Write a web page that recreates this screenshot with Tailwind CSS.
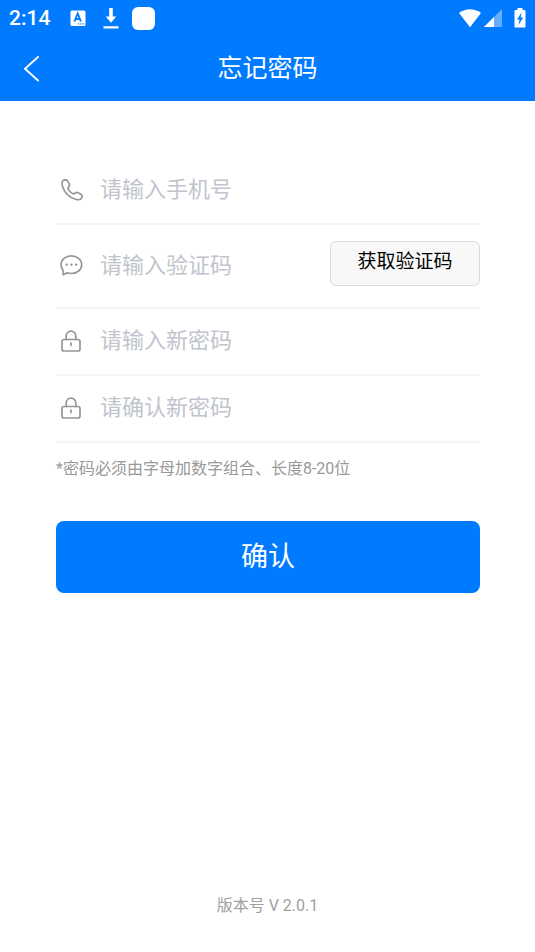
<!DOCTYPE html>
<html lang="zh-CN">
<head>
<meta charset="utf-8">
<meta name="viewport" content="width=device-width, initial-scale=1">
<title>忘记密码</title>
<script src="https://cdn.jsdelivr.net/npm/@tailwindcss/browser@4"></script>
</head>
<body class="flex min-h-screen flex-col bg-white font-[Roboto,'Noto_Sans_CJK_SC',sans-serif]">
  <header class="bg-[#007aff] text-white">
    <div class="flex h-9 items-center justify-between pr-[9px] pl-[9px]">
      <div class="flex items-center">
        <span class="w-[61px] text-[21px] leading-7 font-medium">2:14</span>
        <svg class="h-4 w-4" viewBox="0 0 16 16" aria-hidden="true">
          <rect x="0.5" y="0.5" width="15" height="15.500" rx="1.500" fill="#fff"/>
          <path d="M4.500 11.500 7.700 3.500 10.900 11.500M5.700 9H9.700" fill="none" stroke="#007aff" stroke-width="1.900"/>
          <path d="M8 13.200H9.200V14.400H8ZM10.300 13.200H11.500V14.400H10.300ZM12.600 13.200H13.800V14.400H12.600Z" fill="#007aff"/>
        </svg>
        <svg class="ml-4 h-[22px] w-[18px]" viewBox="0 0 18 22" aria-hidden="true" fill="#fff">
          <path d="M7.200 1H10.800V9.500H14.300L9 15.800 3.700 9.500H7.200ZM1.500 19.200H16.500V21.500H1.500Z"/>
        </svg>
        <span class="ml-3 h-[23px] w-[23px] rounded-md bg-white"></span>
      </div>
      <div class="flex items-center">
        <svg class="h-5 w-6" viewBox="0 0 24 20" aria-hidden="true"><path d="M1 5Q12-2.500 23 5L12 19.300Z" fill="#fff"/></svg>
        <svg class="ml-[2px] h-[19px] w-[18px]" viewBox="0 0 18 19" aria-hidden="true"><path d="M18 0V18H0Z" fill="#fff" fill-opacity=".4"/><path d="M10 8V18H0Z" fill="#fff"/></svg>
        <svg class="ml-3 h-5 w-3" viewBox="0 0 12 20" aria-hidden="true"><path d="M3.500 0H8.500V2H10.500Q11.500 2 11.500 3V18.500Q11.500 19.500 10.500 19.500H1.500Q.5 19.500 .5 18.500V3Q.5 2 1.500 2H3.500Z" fill="#fff"/><path d="M7.500 4.500 3 11.500H5.500L4.500 17 9.200 9.500H6.700Z" fill="#007aff"/></svg>
      </div>
    </div>
    <div class="grid h-[65px] grid-cols-[64px_1fr_64px] items-center">
      <button type="button" aria-label="返回" class="flex h-full items-center pl-[23px]">
        <svg class="h-7 w-4" viewBox="0 0 16 28" fill="none" stroke="#fff" stroke-width="1.900" stroke-linecap="round" stroke-linejoin="round" aria-hidden="true"><path d="M15 2 2 13.700 15 25.500"/></svg>
      </button>
      <h1 class="text-center text-[25px] leading-8">忘记密码</h1>
    </div>
  </header>

  <main class="flex flex-1 flex-col pt-[57px] pr-[55px] pl-14">
    <form class="flex flex-col">
      <div class="flex h-[67px] items-center border-b-2 border-[#f5f5f5] pb-[2px]">
        <label for="phone" class="w-11 shrink-0 pl-1" aria-label="手机号">
          <svg class="h-6 w-6" viewBox="0 0 24 24" fill="none" stroke="#969696" stroke-width="1.700" stroke-linejoin="round" aria-hidden="true"><path d="M3.500 2.300C5.200 1.400 7 1.900 7.900 3.400L9.200 5.800C9.900 7.200 9.500 8.200 8.600 9.100C7.700 10 7.800 10.800 8.500 11.700Q10.100 13.800 12.300 15.400C13.200 16.100 14 16.100 14.900 15.200C15.900 14.400 17 14.200 18.200 14.800L20.600 16C22 16.800 22.500 18 21.900 19.600C21 21.500 18.500 22.200 15.400 21.200C9.300 19.200 4.600 14.600 2.700 8.900C1.700 5.900 1.900 3.300 3.500 2.300Z"/></svg>
        </label>
        <input id="phone" type="tel" placeholder="请输入手机号" class="h-8 min-w-0 flex-1 text-[22px] text-gray-800 outline-none placeholder:text-[#c0c4cc]">
      </div>
      <div class="flex h-[84px] items-center border-b-2 border-[#f5f5f5] pb-[2px]">
        <label for="code" class="w-11 shrink-0 pl-1" aria-label="验证码">
          <svg class="h-6 w-6" viewBox="0 0 24 24" aria-hidden="true"><path d="M3.200 21.800 3 17.200C1.800 15.700 1 13.800 1 11.700 1 6.600 5.600 2.800 11.300 2.800S21.700 6.600 21.700 11.700 17 20.500 11.300 20.500Q9 20.500 7.200 19.800Z" fill="none" stroke="#969696" stroke-width="1.700" stroke-linejoin="round"/><g fill="#969696"><circle cx="6.700" cy="11.600" r="1.200"/><circle cx="11.400" cy="11.600" r="1.200"/><circle cx="16.100" cy="11.600" r="1.200"/></g></svg>
        </label>
        <input id="code" type="text" placeholder="请输入验证码" class="h-8 min-w-0 flex-1 text-[22px] text-gray-800 outline-none placeholder:text-[#c0c4cc]">
        <button type="button" class="mb-1 h-[45px] w-[150px] shrink-0 rounded-md border border-[#dcdcdc] bg-[#f8f8f8] pb-[2px] text-[19px] text-black">获取验证码</button>
      </div>
      <div class="flex h-[67px] items-center border-b-2 border-[#f5f5f5] pb-[2px]">
        <label for="password" class="w-11 shrink-0 pl-1" aria-label="新密码">
          <svg class="h-6 w-6" viewBox="0 0 24 24" fill="none" stroke="#969696" stroke-width="1.700" stroke-linecap="round" aria-hidden="true"><rect x="2" y="10.500" width="18" height="11.500" rx="2"/><path d="M6.200 10.500V7A4.800 4.800 0 0 1 15.800 7V10.500M11 14V16.500"/></svg>
        </label>
        <input id="password" type="password" placeholder="请输入新密码" class="h-8 min-w-0 flex-1 text-[22px] text-gray-800 outline-none placeholder:text-[#c0c4cc]">
      </div>
      <div class="flex h-[67px] items-center border-b-2 border-[#f5f5f5] pb-[2px]">
        <label for="confirm" class="w-11 shrink-0 pl-1" aria-label="确认新密码">
          <svg class="h-6 w-6" viewBox="0 0 24 24" fill="none" stroke="#969696" stroke-width="1.700" stroke-linecap="round" aria-hidden="true"><rect x="2" y="10.500" width="18" height="11.500" rx="2"/><path d="M6.200 10.500V7A4.800 4.800 0 0 1 15.800 7V10.500M11 14V16.500"/></svg>
        </label>
        <input id="confirm" type="password" placeholder="请确认新密码" class="h-8 min-w-0 flex-1 text-[22px] text-gray-800 outline-none placeholder:text-[#c0c4cc]">
      </div>
      <p class="mt-[14px] text-base text-[#999]">*密码必须由字母加数字组合、长度8-20位</p>
      <button type="submit" class="mt-10 h-[72px] rounded-lg bg-[#007aff] text-[27px] text-white">确认</button>
    </form>
  </main>

  <footer class="pb-[34px] text-center text-base text-[#a0a0a0]">版本号 V 2.0.1</footer>
</body>
</html>
